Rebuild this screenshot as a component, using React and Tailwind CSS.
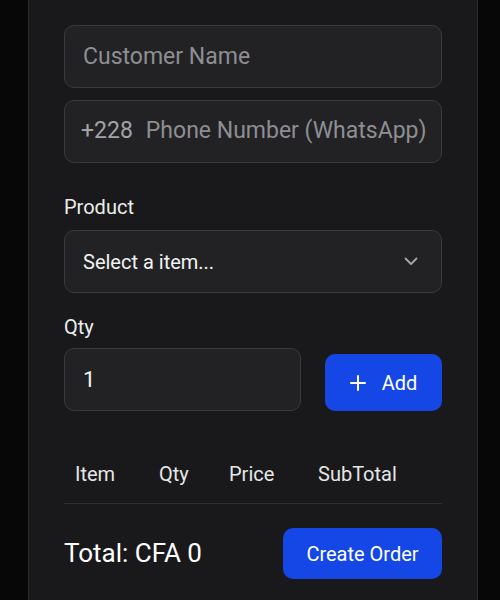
import React, { useState } from "react";

export default function App() {
  const [name, setName] = useState("");
  const [phone, setPhone] = useState("");
  const [qty, setQty] = useState("1");

  return (
    <div className="h-[600px] overflow-hidden bg-[#070707] font-['Roboto',sans-serif]">
      <div className="ml-[28px] w-[450px] min-h-full bg-[#19191b] border-x border-[#2c2c2e] px-[35px] pt-[25px] pb-10">
        {/* Client */}
        <div className="flex flex-col gap-[12px]">
          <input
            value={name}
            onChange={(e) => setName(e.target.value)}
            placeholder="Customer Name"
            className="h-[63px] w-full rounded-[10px] border border-[#3a3a3d] bg-[#222224] px-[18px] text-[23px] text-white placeholder:text-[#8e8e93] outline-none"
          />
          <div className="h-[63px] w-full rounded-[10px] border border-[#3a3a3d] bg-[#222224] pl-[16px] pr-[6px] flex items-center gap-[13px]">
            <span className="text-[23px] text-[#a2a2a7]">+228</span>
            <input
              value={phone}
              onChange={(e) => setPhone(e.target.value)}
              placeholder="Phone Number (WhatsApp)"
              className="flex-1 min-w-0 bg-transparent text-[23px] text-white placeholder:text-[#8e8e93] outline-none"
            />
          </div>
        </div>

        {/* Produit */}
        <label className="block mt-[29px] mb-[8px] text-[20px] leading-[30px] text-[#ececec]">Product</label>
        <div className="h-[63px] w-full rounded-[10px] border border-[#3a3a3d] bg-[#222224] pl-[18px] pr-[23px] flex items-center justify-between">
          <span className="text-[20px] text-[#f2f2f2]">Select a item...</span>
          <svg width="14" height="9" viewBox="0 0 14 9" fill="none" className="text-[#a5a5aa]">
            <polyline points="1.5,1.5 7,7 12.5,1.5" stroke="currentColor" strokeWidth="1.8" strokeLinecap="round" strokeLinejoin="round" />
          </svg>
        </div>

        {/* Quantité */}
        <label className="block mt-[19px] mb-[6px] text-[20px] leading-[30px] text-[#ececec]">Qty</label>
        <div className="flex items-end gap-[24px]">
          <input
            value={qty}
            onChange={(e) => setQty(e.target.value)}
            className="h-[63px] w-[237px] rounded-[10px] border border-[#3a3a3d] bg-[#222224] px-[18px] text-[22px] text-[#f2f2f2] outline-none"
          />
          <button className="h-[57px] flex-1 rounded-[10px] bg-[#1447e6] flex items-center justify-center gap-[16px] text-[20px] text-white">
            <svg width="16" height="16" viewBox="0 0 16 16" fill="none">
              <path d="M8 1v14M1 8h14" stroke="currentColor" strokeWidth="2" strokeLinecap="round" />
            </svg>
            Add
          </button>
        </div>

        {/* Tableau */}
        <div className="mt-[48px] flex text-[20px] leading-[30px] text-[#e6e6e6] border-b border-[#2f2f32] pb-[14px]">
          <div className="w-[84px] pl-[11px]">Item</div>
          <div className="w-[70px] pl-[11px]">Qty</div>
          <div className="w-[89px] pl-[11px]">Price</div>
          <div className="flex-1 pl-[11px]">SubTotal</div>
        </div>

        {/* Total */}
        <div className="mt-[24px] flex items-center justify-between">
          <span className="text-[26px] text-white">Total: CFA 0</span>
          <button className="h-[51px] w-[159px] rounded-[10px] bg-[#1447e6] text-[20px] text-white">Create Order</button>
        </div>
      </div>
    </div>
  );
}
